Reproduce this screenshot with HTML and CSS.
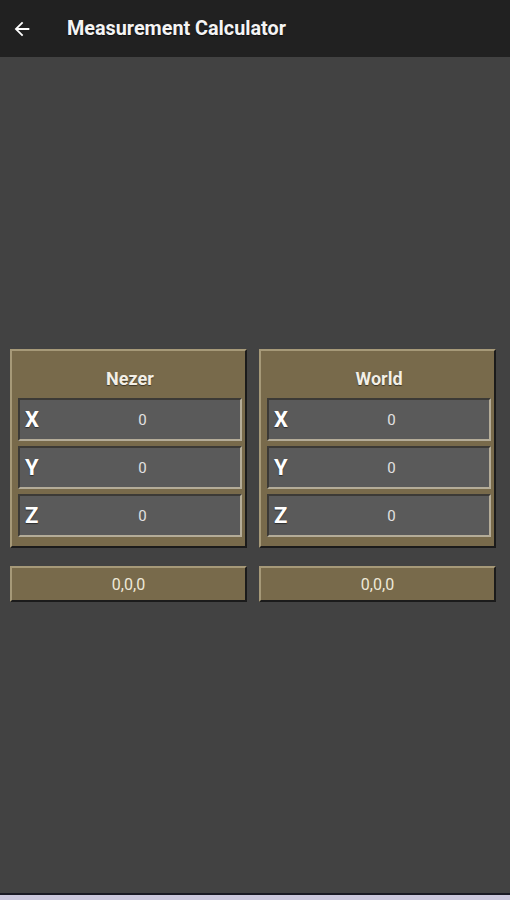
FILE: index.html
```html
<!DOCTYPE html>
<html>
<head>
<meta charset="utf-8">
<link rel="stylesheet" href="styles.css">
</head>
<body>
<div class="app">
  <header class="topbar">
    <svg class="back" width="22" height="22" viewBox="0 0 24 24"><path d="M20 11H7.83l5.59-5.59L12 4l-8 8 8 8 1.41-1.41L7.83 13H20v-2z" fill="#fff"/></svg>
    <span class="title">Measurement Calculator</span>
  </header>
  <main class="content">
    <div class="grid">
      <div class="col">
        <div class="panel">
          <div class="panel-title">Nezer</div>
          <div class="field"><span class="lbl">X</span><span class="val">0</span></div>
          <div class="field"><span class="lbl">Y</span><span class="val">0</span></div>
          <div class="field"><span class="lbl">Z</span><span class="val">0</span></div>
        </div>
        <div class="btn">0,0,0</div>
      </div>
      <div class="col">
        <div class="panel">
          <div class="panel-title">World</div>
          <div class="field"><span class="lbl">X</span><span class="val">0</span></div>
          <div class="field"><span class="lbl">Y</span><span class="val">0</span></div>
          <div class="field"><span class="lbl">Z</span><span class="val">0</span></div>
        </div>
        <div class="btn">0,0,0</div>
      </div>
    </div>
  </main>
  <div class="bottom"></div>
</div>
</body>
</html>
```

FILE: styles.css
```css
html, body {
  margin: 0;
  padding: 0;
  background: #424242;
  font-family: Roboto, "Liberation Sans", Arial, sans-serif;
}
.app {
  width: 510px;
  height: 900px;
  display: flex;
  flex-direction: column;
  overflow: hidden;
}
.topbar {
  height: 57px;
  flex: none;
  background: #212121;
  display: flex;
  align-items: center;
  padding-left: 11px;
  box-sizing: border-box;
}
.back {
  display: block;
  margin-top: 0;
}
.title {
  margin-left: 34px;
  color: #f4f4f4;
  font-size: 19.8px;
  font-weight: 700;
  text-shadow: 0 1px 1px rgba(0,0,0,0.6);
}
.content {
  flex: 1;
  display: flex;
  align-items: center;
  padding-left: 10px;
}
.grid {
  display: grid;
  grid-template-columns: 237px 237px;
  column-gap: 12px;
  margin-top: 1px;
}
.col {
  display: flex;
  flex-direction: column;
  gap: 18px;
}
.panel {
  background: #786a4b;
  border-top: 2px solid #a69978;
  border-left: 2px solid #a69978;
  border-right: 2px solid #1b1b1b;
  border-bottom: 2px solid #1b1b1b;
  padding: 0 3px 9px 6px;
  display: flex;
  flex-direction: column;
  gap: 5px;
}
.panel-title {
  height: 20px;
  line-height: 20px;
  padding: 18px 0 4px;
  text-align: center;
  color: #f3efe6;
  font-weight: 700;
  font-size: 18px;
  text-shadow: 0 1px 1px rgba(0,0,0,0.5);
}
.field {
  height: 39px;
  background: #5a5a5a;
  border-top: 2px solid #3c3a36;
  border-left: 2px solid #3c3a36;
  border-right: 2px solid #b4ac98;
  border-bottom: 2px solid #b4ac98;
  display: flex;
  align-items: center;
}
.lbl {
  width: 20px;
  padding-left: 5px;
  color: #ffffff;
  font-weight: 700;
  font-size: 22px;
  text-shadow: 0 1px 1px rgba(0,0,0,0.5);
}
.val {
  flex: 1;
  text-align: center;
  color: #e2e2e2;
  font-size: 15px;
}
.btn {
  height: 32px;
  background: #786a4b;
  border-top: 2px solid #a69978;
  border-left: 2px solid #a69978;
  border-right: 2px solid #1b1b1b;
  border-bottom: 2px solid #1b1b1b;
  display: flex;
  align-items: center;
  justify-content: center;
  color: #eee8d8;
  font-size: 16px;
}
.bottom {
  height: 5px;
  flex: none;
  background: #cbc7dc;
  border-top: 2px solid #1a1a24;
}
```
